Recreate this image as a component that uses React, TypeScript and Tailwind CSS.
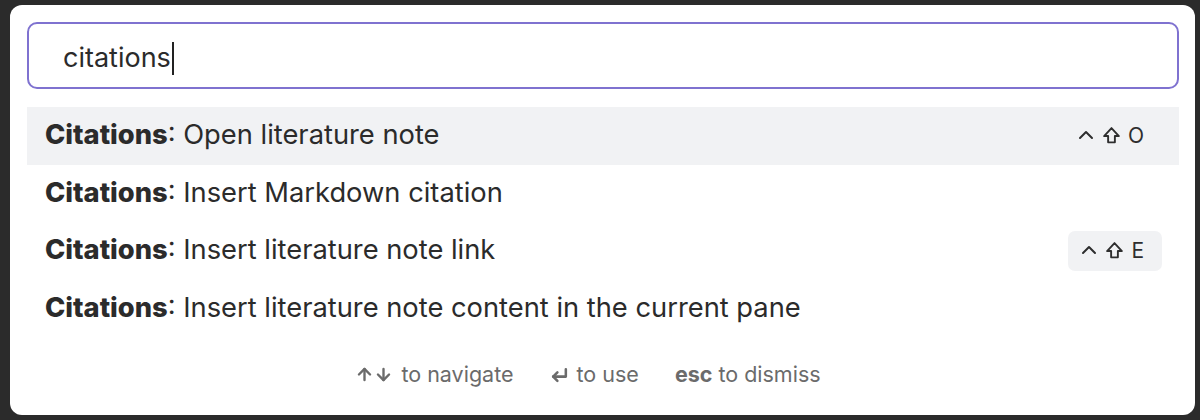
import { ArrowUp, ArrowDown } from 'lucide-react';

type Command = { name: string; hotkey?: string[]; selected?: boolean };

const commands: Command[] = [
  { name: 'Open literature note', hotkey: ['^', '⇧', 'O'], selected: true },
  { name: 'Insert Markdown citation' },
  { name: 'Insert literature note link', hotkey: ['^', '⇧', 'E'] },
  { name: 'Insert literature note content in the current pane' },
];

function CaretIcon() {
  return (
    <svg width="18" height="18" viewBox="0 0 18 18" fill="none" stroke="currentColor" strokeWidth="2" strokeLinecap="round" strokeLinejoin="round">
      <path d="M3 11 L9 5 L15 11" />
    </svg>
  );
}

function ShiftIcon() {
  return (
    <svg width="19" height="19" viewBox="0 0 18 18" fill="none" stroke="currentColor" strokeWidth="1.8" strokeLinejoin="round">
      <path d="M9 2 L2 9.5 H5.8 V15.5 H12.2 V9.5 H16 Z" />
    </svg>
  );
}

function Hotkey({ keys, boxed }: { keys: string[]; boxed: boolean }) {
  return (
    <div
      className={`flex items-center gap-[7px] text-[21px] text-[#2e2e2e] rounded-[7px] h-[40px] pl-[12px] pr-[18px] ${
        boxed ? 'bg-[#f1f2f4]' : ''
      }`}
    >
      {keys.map((k, i) =>
        k === '⇧' ? (
          <ShiftIcon key={i} />
        ) : k === '^' ? (
          <CaretIcon key={i} />
        ) : (
          <span key={i} className="leading-none">
            {k}
          </span>
        )
      )}
    </div>
  );
}

function EnterIcon() {
  return (
    <svg width="19" height="19" viewBox="0 0 18 18" fill="none" stroke="currentColor" strokeWidth="2.4" strokeLinecap="round" strokeLinejoin="round">
      <path d="M15 4 V11 H3" />
      <path d="M7 7 L3 11 L7 15" />
    </svg>
  );
}

export default function App() {
  return (
    <div className="h-[420px] w-[1200px] bg-[#2b2b2b] pt-[5px] pl-[10px] pr-[5px] pb-[5px] font-['Inter',sans-serif]">
      <div className="h-full bg-white rounded-[12px] pt-[17px] pl-[17px] pr-[16px] flex flex-col">
        {/* Search box */}
        <div className="h-[67px] border-2 border-[#7f72d0] rounded-[10px] flex items-center pl-[34px] pt-[6px]">
          <span className="text-[27px] text-[#2b2b2b]">citations</span>
          <span className="w-[2px] h-[33px] bg-[#222] ml-[1px]" />
        </div>

        {/* Results */}
        <div className="mt-[18px] flex flex-col">
          {commands.map((c) => (
            <div
              key={c.name}
              className={`h-[57.5px] flex items-center justify-between pl-[18px] pr-[17px] ${
                c.selected ? 'bg-[#f1f2f4]' : ''
              }`}
            >
              <div className="text-[27.3px] text-[#2b2b2b]">
                <span className="font-extrabold">Citations</span>: {c.name}
              </div>
              {c.hotkey && <Hotkey keys={c.hotkey} boxed={!c.selected} />}
            </div>
          ))}
        </div>

        {/* Instructions */}
        <div className="flex-1 flex items-center justify-center pr-[30px] pb-[3px] text-[21.5px] text-[#6b6b6b] gap-[36px]">
          <div className="flex items-center gap-[8px]">
            <span className="flex items-center">
              <ArrowUp size={19} strokeWidth={3} />
              <ArrowDown size={19} strokeWidth={3} />
            </span>
            <span>to navigate</span>
          </div>
          <div className="flex items-center gap-[8px]">
            <EnterIcon />
            <span>to use</span>
          </div>
          <div className="flex items-center gap-[6px]">
            <span className="font-bold">esc</span>
            <span>to dismiss</span>
          </div>
        </div>
      </div>
    </div>
  );
}
